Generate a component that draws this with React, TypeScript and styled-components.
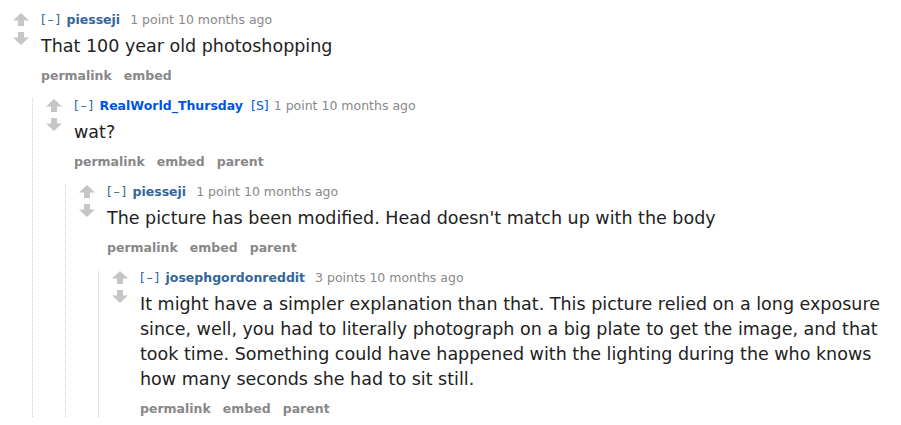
import React from "react";
import styled, { createGlobalStyle } from "styled-components";

const Global = createGlobalStyle`
  html, body { margin: 0; padding: 0; background: #fff; }
  body { font-family: "DejaVu Sans", Verdana, sans-serif; }
`;

const Page = styled.div`
  padding: 12px 12px 0 0;
  width: 901px;
  box-sizing: border-box;
`;

const CommentBox = styled.div``;

const Row = styled.div`
  display: flex;
  align-items: flex-start;
`;

const MidCol = styled.div`
  width: 16px;
  margin-left: 13px;
  margin-right: 12px;
  display: flex;
  flex-direction: column;
  align-items: center;
  padding-top: 1px;
  gap: 6px;
  flex: none;
`;

const Entry = styled.div`
  flex: 1;
  min-width: 0;
`;

const Tagline = styled.div`
  font-size: 12.5px;
  line-height: 16px;
  color: #888;
  white-space: nowrap;
`;

const Expand = styled.span`
  color: #369;
  letter-spacing: 1.5px;
  margin-right: 5px;
`;

const Author = styled.span<{ $op?: boolean }>`
  font-weight: bold;
  color: ${(p) => (p.$op ? "#0055df" : "#369")};
  margin-right: ${(p) => (p.$op ? "8px" : "10px")};
`;

const Flair = styled.span`
  color: #0055df;
  margin-right: 5px;
`;

const Body = styled.div`
  font-size: 17.5px;
  line-height: 25px;
  color: #222;
  padding-top: 6px;
`;

const Buttons = styled.div`
  display: flex;
  gap: 12px;
  margin-top: 9px;
  font-size: 12.5px;
  line-height: 16px;
  font-weight: bold;
  color: #888;
`;

const Child = styled.div`
  margin-left: 32px;
  margin-top: 14px;
  border-left: 1px dotted #c8c8f0;
`;

const Arrow = ({ down }: { down?: boolean }) => (
  <svg width="16" height="13" viewBox="0 0 16 13" style={down ? { transform: "rotate(180deg)" } : undefined}>
    <path d="M8 0 L16 7.5 L11 7.5 L11 13 L5 13 L5 7.5 L0 7.5 Z" fill="#c6c6c6" />
  </svg>
);

type C = {
  author: string;
  op?: boolean;
  points: string;
  body: string;
  parent?: boolean;
  child?: C;
};

const data: C = {
  author: "piesseji",
  points: "1 point",
  body: "That 100 year old photoshopping",
  child: {
    author: "RealWorld_Thursday",
    op: true,
    points: "1 point",
    body: "wat?",
    parent: true,
    child: {
      author: "piesseji",
      points: "1 point",
      body: "The picture has been modified. Head doesn't match up with the body",
      parent: true,
      child: {
        author: "josephgordonreddit",
        points: "3 points",
        body:
          "It might have a simpler explanation than that. This picture relied on a long exposure since, well, you had to literally photograph on a big plate to get the image, and that took time. Something could have happened with the lighting during the who knows how many seconds she had to sit still.",
        parent: true,
      },
    },
  },
};

const Comment = ({ c }: { c: C }) => (
  <CommentBox>
    <Row>
      <MidCol>
        <Arrow />
        <Arrow down />
      </MidCol>
      <Entry>
        <Tagline>
          <Expand>[–]</Expand>
          <Author $op={c.op}>{c.author}</Author>
          {c.op && <Flair>[S]</Flair>}
          {c.points} 10 months ago
        </Tagline>
        <Body>{c.body}</Body>
        <Buttons>
          <span>permalink</span>
          <span>embed</span>
          {c.parent && <span>parent</span>}
        </Buttons>
      </Entry>
    </Row>
    {c.child && (
      <Child>
        <Comment c={c.child} />
      </Child>
    )}
  </CommentBox>
);

export default function App() {
  return (
    <Page>
      <Global />
      <Comment c={data} />
    </Page>
  );
}
